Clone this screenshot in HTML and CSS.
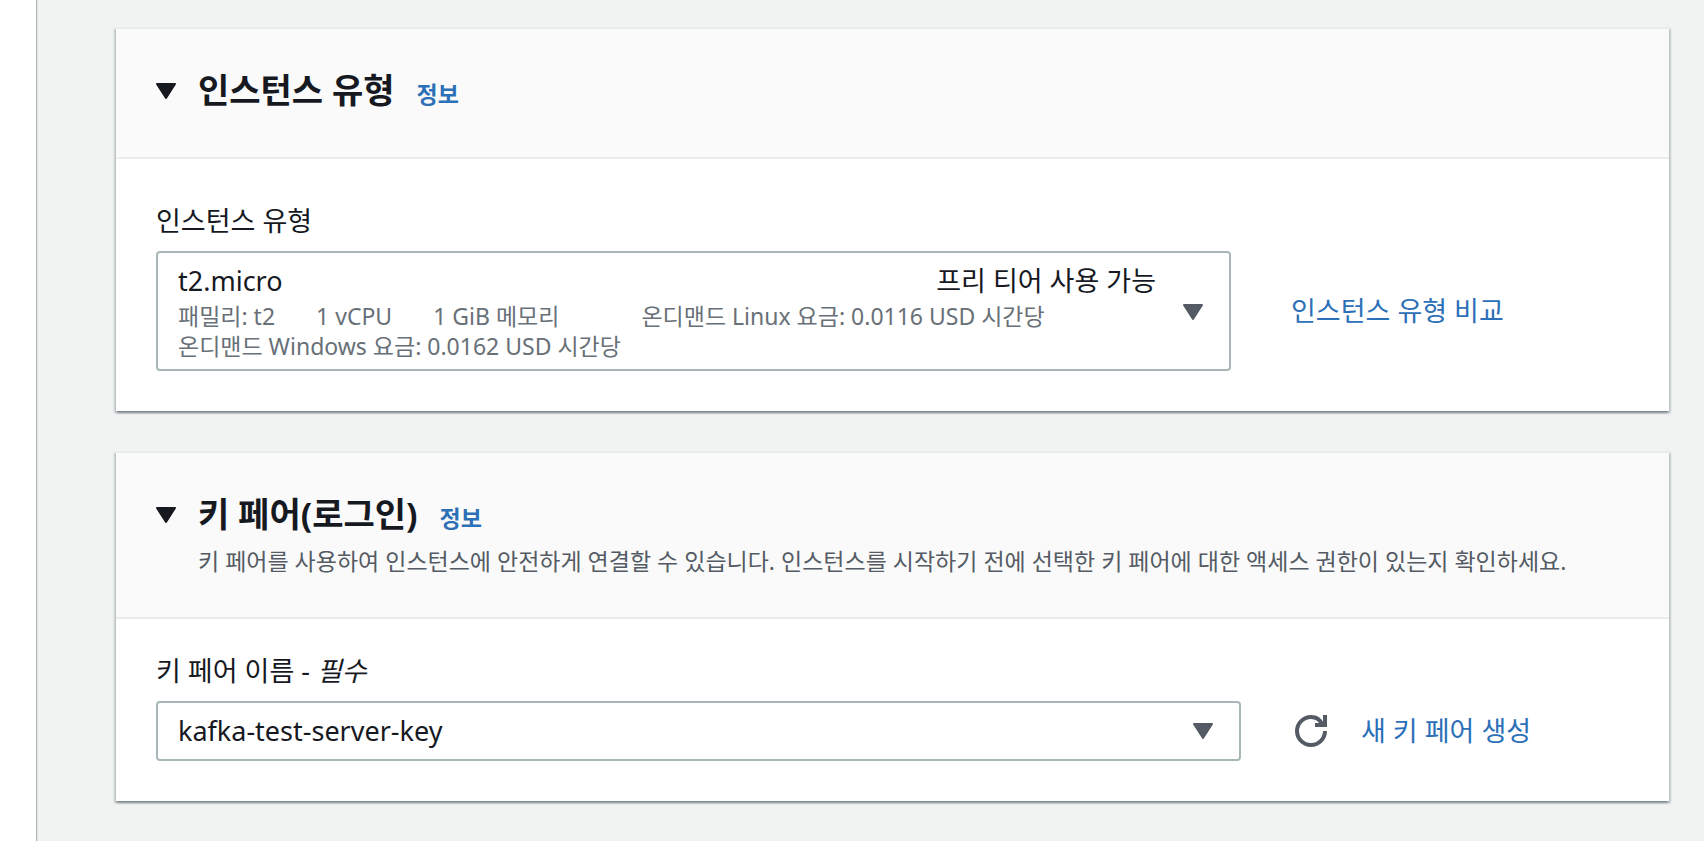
FILE: index.html
```html
<!DOCTYPE html>
<html lang="ko">
<head>
<meta charset="utf-8">
<meta name="viewport" content="width=device-width, initial-scale=1">
<title>인스턴스 시작</title>
<link rel="stylesheet" href="styles.css">
</head>
<body>
<div class="layout">
  <aside class="sidebar"></aside>
  <main class="content">
    <section class="card">
      <header class="card-header">
        <button class="toggle" type="button" aria-expanded="true" aria-label="인스턴스 유형 접기">
          <svg class="caret" viewBox="0 0 20 16" aria-hidden="true"><path d="M1 1h18l-9 14z"/></svg>
        </button>
        <div class="heading">
          <h2 class="title">인스턴스 유형</h2>
          <a class="info" href="#">정보</a>
        </div>
      </header>
      <div class="card-body">
        <span class="label" id="type-label">인스턴스 유형</span>
        <div class="row row-type">
          <button class="picker" type="button" aria-haspopup="listbox" aria-labelledby="type-label type-value">
            <span class="picker-text">
              <span class="picker-main">
                <span id="type-value">t2.micro</span>
                <span>프리 티어 사용 가능</span>
              </span>
              <span class="specs">
                <span>패밀리: t2</span>
                <span>1 vCPU</span>
                <span>1 GiB 메모리</span>
                <span></span>
                <span>온디맨드 Linux 요금: 0.0116 USD 시간당</span>
                <span>온디맨드 Windows 요금: 0.0162 USD 시간당</span>
              </span>
            </span>
            <svg class="caret" viewBox="0 0 20 16" aria-hidden="true"><path d="M1 1h18l-9 14z"/></svg>
          </button>
          <div class="side">
            <a class="link" href="#">인스턴스 유형 비교</a>
          </div>
        </div>
      </div>
    </section>

    <section class="card">
      <header class="card-header">
        <button class="toggle" type="button" aria-expanded="true" aria-label="키 페어 접기">
          <svg class="caret" viewBox="0 0 20 16" aria-hidden="true"><path d="M1 1h18l-9 14z"/></svg>
        </button>
        <div class="heading">
          <h2 class="title">키 페어(로그인)</h2>
          <a class="info" href="#">정보</a>
          <p class="description">키 페어를 사용하여 인스턴스에 안전하게 연결할 수 있습니다. 인스턴스를 시작하기 전에 선택한 키 페어에 대한 액세스 권한이 있는지 확인하세요.</p>
        </div>
      </header>
      <div class="card-body card-body-compact">
        <label class="label" for="key-pair">키 페어 이름 - <em>필수</em></label>
        <div class="row row-key">
          <div class="select-wrap">
            <select class="select" id="key-pair">
              <option>kafka-test-server-key</option>
            </select>
            <svg class="caret select-caret" viewBox="0 0 20 16" aria-hidden="true"><path d="M1 1h18l-9 14z"/></svg>
          </div>
          <div class="side">
            <button class="refresh" type="button" aria-label="새로 고침">
              <svg viewBox="0 0 32 32" aria-hidden="true">
                <path d="M30 16a14 14 0 1 1-14-14c5 0 9.500 3 11.500 8"/>
                <path d="M20 10h10V0"/>
              </svg>
            </button>
            <a class="link" href="#">새 키 페어 생성</a>
          </div>
        </div>
      </div>
    </section>
  </main>
</div>
</body>
</html>
```
FILE: styles.css
```css
* {
  box-sizing: border-box;
}

body {
  margin: 0;
  background: #f1f3f3;
  color: #16191f;
  font-family: "Noto Sans", "Noto Sans CJK KR", sans-serif;
  font-size: 27px;
  line-height: 36px;
}

button,
select {
  color: inherit;
  font: inherit;
}

a {
  color: #2c70b8;
  text-decoration: none;
}

a:hover {
  text-decoration: underline;
}

.layout {
  display: flex;
  min-height: 100vh;
}

.sidebar {
  flex: none;
  width: 36px;
  background: #fff;
  box-shadow: 1px 0 1px #aab3b8;
}

.content {
  flex: 1;
  min-width: 0;
  display: flex;
  flex-direction: column;
  gap: 40px;
  padding: 27px 35px 40px 80px;
}

.card {
  background: #fff;
  border-top: 2px solid #eaeded;
  box-shadow:
    0 2px 2px rgba(0, 28, 36, 0.3),
    2px 2px 2px rgba(0, 28, 36, 0.15),
    -2px 2px 2px rgba(0, 28, 36, 0.15);
}

.card-header {
  display: flex;
  align-items: flex-start;
  gap: 22px;
  padding: 40px 40px 44px;
  background: #fafafa;
  border-bottom: 2px solid #eaeded;
}

.toggle {
  display: flex;
  align-items: center;
  height: 44px;
  padding: 0;
  border: 0;
  background: none;
}

.caret {
  flex: none;
  display: block;
  width: 20px;
  height: 16px;
  fill: #545b64;
  stroke: #545b64;
  stroke-width: 2;
  stroke-linejoin: round;
}

.toggle .caret {
  fill: #16191f;
  stroke: #16191f;
}

.heading {
  display: flex;
  flex-wrap: wrap;
  align-items: baseline;
  column-gap: 22px;
}

.title {
  margin: 0;
  font-size: 34px;
  font-weight: 700;
  line-height: 42px;
}

.info {
  font-size: 23px;
  font-weight: 700;
  line-height: 24px;
}

.description {
  width: 100%;
  margin: 14px 0 0;
  color: #545b64;
  font-size: 23px;
  line-height: 24px;
}

.card-body {
  padding: 44px 40px 40px;
}

.card-body-compact {
  padding-top: 34px;
}

.label {
  display: block;
  margin-bottom: 12px;
}

.row {
  display: grid;
  align-items: center;
}

.row-type {
  grid-template-columns: minmax(0, 1fr) 338px;
  gap: 60px;
}

.row-key {
  grid-template-columns: minmax(0, 1fr) 334px;
  gap: 54px;
}

.picker {
  display: flex;
  align-items: center;
  gap: 27px;
  padding: 10px 26px 8px 20px;
  border: 2px solid #aab7b8;
  border-radius: 4px;
  background: #fff;
  text-align: left;
}

.picker-text {
  flex: 1;
  min-width: 0;
}

.picker-main {
  display: flex;
  justify-content: space-between;
}

.specs {
  display: flex;
  flex-wrap: wrap;
  column-gap: 41px;
  margin-top: 2px;
  color: #687078;
  font-size: 23px;
  line-height: 30px;
}

.side {
  display: flex;
  align-items: center;
  gap: 34px;
}

.select-wrap {
  position: relative;
}

.select {
  display: block;
  width: 100%;
  height: 60px;
  padding: 0 60px 0 20px;
  border: 2px solid #aab7b8;
  border-radius: 4px;
  background: #fff;
  appearance: none;
}

.select-caret {
  position: absolute;
  top: 22px;
  right: 28px;
  pointer-events: none;
}

.refresh {
  padding: 0;
  border: 0;
  background: none;
}

.refresh svg {
  display: block;
  width: 32px;
  height: 32px;
  fill: none;
  stroke: #545b64;
  stroke-width: 4;
}
```
